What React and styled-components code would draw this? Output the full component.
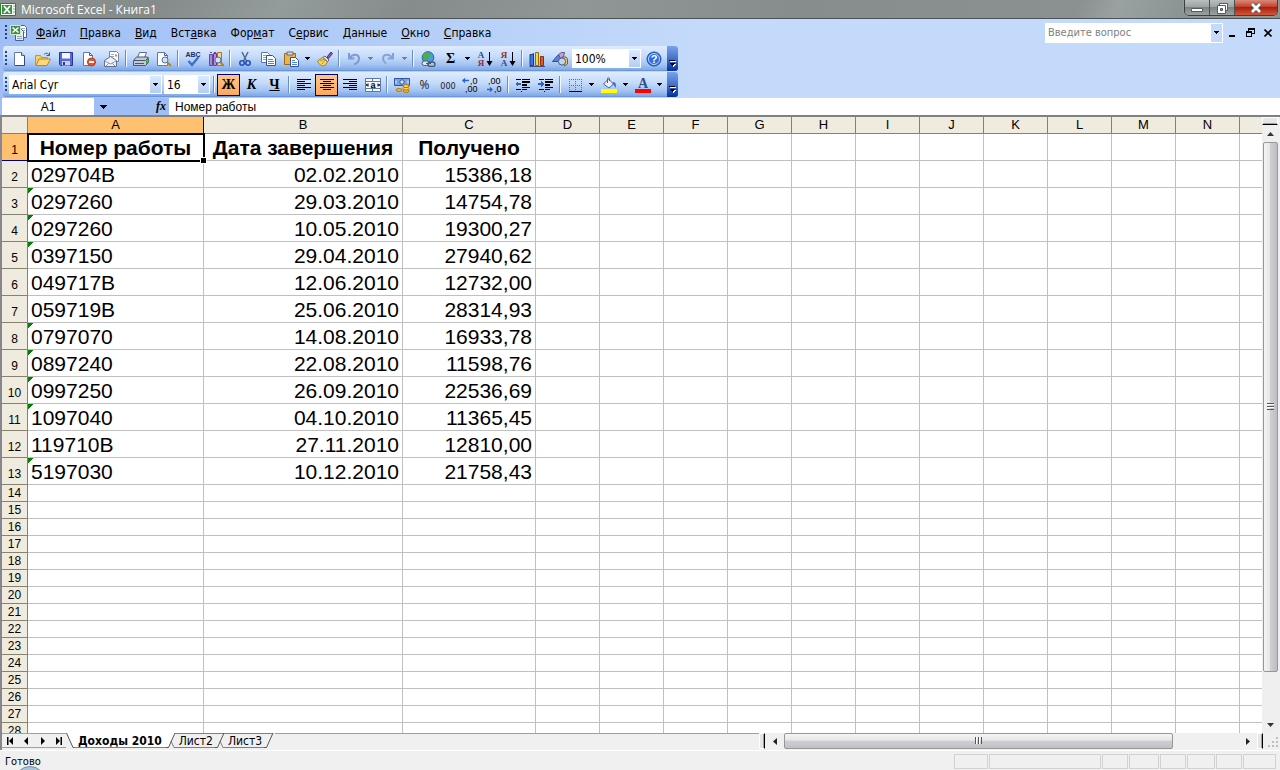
import React from "react";
import styled, { createGlobalStyle, css } from "styled-components";

const ui = '"DejaVu Sans Condensed", "Noto Sans", sans-serif';
const arial = '"Liberation Sans", Arial, sans-serif';

const Global = createGlobalStyle`
  * { box-sizing: border-box; }
  html, body, #root { height: 100%; }
  body { margin: 0; overflow: hidden; font: 11px ${ui}; color: #000; background: #f0f0f0; }
  button, input, select { font: inherit; color: inherit; margin: 0; padding: 0; border: 0; border-radius: 0; background: none; outline: none; }
  button { display: flex; align-items: center; justify-content: center; }
`;

const Window = styled.div`
  display: flex;
  flex-direction: column;
  height: 100vh;
  overflow: hidden;
`;

/* ---------- title bar ---------- */
const TitleBar = styled.header`
  display: flex;
  justify-content: space-between;
  height: 19px;
  flex: none;
  border-bottom: 1px solid #4d5354;
  background: linear-gradient(115deg, #8b9392 0%, #848b8a 12%, #949c9b 22%, #858c8b 32%, #8f9695 45%, #868d8c 62%, #8a9190 84%, #9aa2a1 87%, #8a9291 93%);
`;
const Title = styled.h1`
  display: flex;
  align-items: center;
  gap: 5px;
  margin: 0;
  font: 12px "Open Sans", "Noto Sans", sans-serif;
  color: #fff;
`;
const WinButtons = styled.div`
  display: flex;
  height: 16px;
  margin-right: 2px;
  border: 1px solid #3b4040;
  border-top: 0;
  border-radius: 0 0 5px 5px;
  overflow: hidden;
  box-shadow: 0 0 1px #dfe3e3;
`;
const WinButton = styled.button`
  width: ${(p) => (p.$close ? 42 : 25)}px;
  border-right: ${(p) => (p.$close ? 0 : "1px solid #4b5050")};
  background: ${(p) =>
    p.$close
      ? "linear-gradient(#d98a7b, #c4412c 45%, #a8200e 50%, #d2563a)"
      : "linear-gradient(#b9bfbf, #9da4a4 45%, #7c8484 50%, #99a1a1)"};
`;

/* ---------- command bars ---------- */
const Bars = styled.div`
  flex: none;
  background: linear-gradient(90deg, #9ebef5, #c4dafa 700px);
`;
const MenuBar = styled.nav`
  display: flex;
  align-items: center;
  height: 27px;
  padding: 0 3px 0 5px;
`;
const Handle = styled.span`
  flex: none;
  width: 3px;
  height: 16px;
  background: repeating-linear-gradient(#27418e 0 2px, transparent 2px 4px);
  background-size: 2px 100%;
  background-repeat: no-repeat;
`;
const MenuItem = styled.button`
  height: 20px;
  padding: 0 7px;
  font-size: 12px;
  white-space: pre;
`;
const MenuIcon = styled.span`
  display: flex;
  justify-content: center;
  width: 21px;
`;
const Spacer = styled.span`
  flex: 1;
`;
const AskBox = styled.span`
  display: flex;
  width: 178px;
  height: 20px;
  padding: 1px;
  background: #fff;
`;
const AskInput = styled.input`
  flex: 1;
  min-width: 0;
  padding: 0 2px;
  &::placeholder { color: #808080; opacity: 1; }
`;
const AskArrow = styled.button`
  width: 11px;
  background: #c4dafa;
`;
const DocButton = styled.button`
  width: 18px;
  height: 16px;
`;
const ToolBar = styled.div`
  display: flex;
  align-items: center;
  width: 675px;
  height: 25px;
  margin: 0 0 1px 3px;
  padding-left: 2px;
  border-radius: 3px;
  overflow: hidden;
  background: linear-gradient(#dfecfe, #c3dafa 45%, #a3c3f2 75%, #7fa8e6 96%, #5a84cf);
`;
const Tool = styled.button`
  flex: none;
  width: 23px;
  height: 22px;
  ${(p) =>
    p.$on &&
    css`
      border: 1px solid #000080;
      background: linear-gradient(#ffc58a, #fba85c);
    `}
`;
const Letter = styled.span`
  font: ${(p) => (p.$italic ? "italic" : "normal")} bold 14px "Liberation Serif", serif;
  text-decoration: ${(p) => (p.$under ? "underline" : "none")};
`;
const ToolText = styled.span`
  font: 12px "Open Sans", "Noto Sans", sans-serif;
  color: #222;
`;
const Drop = styled.button`
  flex: none;
  width: 11px;
  height: 22px;
  opacity: ${(p) => (p.$off ? 0.4 : 1)};
`;
const Sep = styled.span`
  flex: none;
  width: 2px;
  height: 17px;
  margin: 0 2px;
  border-left: 1px solid #6a8ccb;
  border-right: 1px solid #f1f9ff;
`;
const Combo = styled.span`
  position: relative;
  display: flex;
  flex: none;
  width: ${(p) => p.$w}px;
  height: 19px;
  margin: 0 1px;
  background: #fff;
`;
const ComboSelect = styled.select`
  width: 100%;
  padding: 0 14px 0 3px;
  appearance: none;
  font: 12px ${ui};
`;
const ComboArrow = styled.span`
  position: absolute;
  top: 1px;
  right: 1px;
  bottom: 1px;
  display: flex;
  align-items: center;
  justify-content: center;
  width: 11px;
  background: linear-gradient(#dbe9fd, #b4cef5);
  pointer-events: none;
`;
const Overflow = styled.button`
  width: 11px;
  height: 25px;
  margin-left: auto;
  align-items: flex-end;
  padding-bottom: 2px;
  background: linear-gradient(#7aa2ea, #4272cb 50%, #05319a);
`;

/* ---------- formula bar ---------- */
const FormulaBar = styled.div`
  display: flex;
  flex: none;
  height: 17px;
  padding-left: 2px;
  background: #9ebef5;
`;
const NameBox = styled.input`
  width: 92px;
  background: #fff;
  text-align: center;
  font: 12px ${arial};
`;
const NameArrow = styled.button`
  width: 18px;
`;
const Fx = styled.button`
  width: 16px;
  margin-left: 41px;
  font: italic bold 12px "Liberation Serif", serif;
`;
const FormulaInput = styled.input`
  flex: 1;
  padding-left: 6px;
  background: #fff;
  font: 12px ${arial};
`;

/* ---------- sheet ---------- */
const Work = styled.main`
  display: flex;
  flex: 1;
  min-height: 0;
  padding-right: 2px;
  border-left: 2px solid #87878d;
  border-top: 2px solid #808080;
`;
const SheetArea = styled.div`
  flex: 1;
  min-width: 0;
  overflow: hidden;
  background: #fff;
`;
const Grid = styled.table`
  width: 100%;
  table-layout: fixed;
  border-collapse: separate;
  border-spacing: 0;
  font-family: ${arial};
`;
const Col = styled.col`
  width: ${(p) => (p.$w ? p.$w + "px" : "auto")};
`;
const ColHead = styled.th`
  height: 17px;
  padding: 0;
  border-right: 1px solid ${(p) => (p.$on ? "#000080" : "#85836d")};
  border-bottom: 1px solid ${(p) => (p.$on ? "#000080" : "#85836d")};
  background: ${(p) => (p.$on ? "#ffc06f" : "#efebde")};
  font-weight: normal;
  font-size: 13px;
  line-height: 16px;
  thead &:last-child { border-right: 0; }
`;
const RowHead = styled(ColHead)`
  height: ${(p) => (p.$tall ? 27 : 17)}px;
  padding-bottom: ${(p) => (p.$tall ? 2 : 0)}px;
  border-right-color: #85836d;
  font-size: 12px;
  vertical-align: bottom;
`;
const Cell = styled.td`
  position: relative;
  padding: 2px 3px 0;
  border-right: 1px solid #c0c0c0;
  border-bottom: 1px solid #c0c0c0;
  font-size: 21px;
  line-height: 24px;
  white-space: nowrap;
  text-align: ${(p) => p.$align || "left"};
  font-weight: ${(p) => (p.$bold ? "bold" : "normal")};
  ${(p) => p.$flag && "background: linear-gradient(135deg, #008000 4px, transparent 4px);"}
  &:last-child { border-right: 0; }
`;
const Selection = styled.span`
  position: absolute;
  inset: -1px -2px -2px -1px;
  border: 2px solid #000;
  z-index: 1;
  &::after {
    content: "";
    position: absolute;
    right: -3px;
    bottom: -3px;
    width: 5px;
    height: 5px;
    background: #000;
    outline: 1px solid #fff;
  }
`;

/* ---------- scroll bars ---------- */
const VScroll = styled.div`
  display: flex;
  flex-direction: column;
  flex: none;
  width: 16px;
  background: #efefef;
`;
const VSplit = styled.span`
  height: 8px;
  border: 1px solid #fff;
  border-bottom: 1px solid #000;
  background: #e6e6e6;
  box-shadow: inset 0 -1px #a0a0a0;
`;
const ScrollButton = styled.button`
  flex: none;
  width: ${(p) => (p.$h ? 19 : 16)}px;
  height: ${(p) => (p.$h ? 16 : 17)}px;
`;
const VThumb = styled.button`
  flex: 530;
  margin-left: 1px;
  border: 1px solid #979797;
  border-radius: 2px;
  background: linear-gradient(90deg, #f5f5f5, #e6e6e8 45%, #cfcfd3 50%, #bcbcc2);
`;
const Rest = styled.span`
  flex: ${(p) => p.$n};
`;
const Bottom = styled.div`
  display: flex;
  flex: none;
  height: 17px;
  border-left: 2px solid #87878d;
  background: #f0f0f0;
`;
const Tabs = styled.div`
  display: flex;
  flex: 757;
  min-width: 0;
  height: 15px;
`;
const TabNav = styled.button`
  width: 16px;
  border-top: 1px solid #a0a0a0;
  border-bottom: 1px solid #a0a0a0;
`;
const Tab = styled.button`
  padding: 0 ${(p) => (p.$on ? 4 : 2)}px;
  border-bottom: 1px solid #808080;
  border-top: 1px solid ${(p) => (p.$on ? "#fff" : "#808080")};
  background: ${(p) => (p.$on ? "#fff" : "#f0f0f0")};
  font: ${(p) => (p.$on ? "bold 12px" : "12px")} ${ui};
`;
const Slant = styled.svg`
  flex: none;
  width: ${(p) => p.$w}px;
  height: 15px;
`;
const TabFill = styled.span`
  flex: 1;
  border-top: 1px solid #a0a0a0;
`;
const HScroll = styled.div`
  display: flex;
  flex: 521;
  height: 16px;
`;
const HSplit = styled.span`
  width: 6px;
  border: 1px solid #fff;
  border-right: 1px solid #000;
  background: #e6e6e6;
  box-shadow: inset -1px 0 #a0a0a0;
`;
const HThumb = styled.button`
  flex: 388;
  border: 1px solid #979797;
  border-radius: 2px;
  background: linear-gradient(#f5f5f5, #e6e6e8 45%, #cfcfd3 50%, #c0c0c6);
`;
const Corner = styled.span`
  display: flex;
  align-items: flex-end;
  justify-content: flex-end;
  width: 17px;
  padding: 1px;
`;

/* ---------- status bar ---------- */
const Status = styled.footer`
  position: relative;
  display: flex;
  flex: none;
  align-items: center;
  gap: 1px;
  height: 20px;
  padding: 2px 4px 0 5px;
  border-top: 1px solid #fff;
  background: #f0f0f0;
`;
const StatusCell = styled.span`
  width: ${(p) => p.$w}px;
  height: 15px;
  border: 1px solid #d2d2d2;
`;
const Orb = styled.span`
  position: absolute;
  left: 14px;
  top: 15px;
  width: 32px;
  height: 32px;
  border-radius: 50%;
  border: 1px solid #6f93b0;
  background: #a9c4d8;
`;

/* ---------- drawings ---------- */
const Svg = ({ w = 16, h = 16, children, crisp }) => (
  <svg width={w} height={h} viewBox={`0 0 ${w} ${h}`} fill="none" shapeRendering={crisp ? "crispEdges" : "auto"} aria-hidden="true">
    {children}
  </svg>
);
const Down = () => (
  <Svg w={5} h={3} crisp><path d="M0 0h5v1H4v1H3v1H2V2H1V1H0z" fill="#000" /></Svg>
);
const TriV = ({ up }) => (
  <Svg w={7} h={4}><path d={up ? "M0 4 3.500 0 7 4z" : "M0 0h7L3.500 4z"} fill="#333" /></Svg>
);
const TriH = ({ right }) => (
  <Svg w={4} h={7}><path d={right ? "M0 0v7l4-3.500z" : "M4 0v7L0 3.500z"} fill="#222" /></Svg>
);
const ExcelLogo = () => (
  <Svg>
    <path d="M.5 2.500h15v12H.5z" fill="#f3faf1" stroke="#2f7c35" />
    <path d="M2 4h10v9H2z" fill="#3d9142" />
    <path d="M13 5h2M13 8h2M13 11h2" stroke="#7fb983" />
    <path d="m4 5 6 7M10 5l-6 7" stroke="#fff" strokeWidth="1.800" />
  </Svg>
);
const DocLogo = () => (
  <Svg w={18} h={18}>
    <path d="M8.500 1.500h6l2 2v10h-8z" fill="#fff" stroke="#4a5f8e" />
    <path d="M11 4.500h4M11 6.500h4M11 8.500h4" stroke="#9db0d8" />
    <path d="M5.500 5.500h6l2 2v9h-8z" fill="#e6edf9" stroke="#4a5f8e" />
    <path d="M7 12.500h5M7 14.500h5" stroke="#8ca0c8" />
    <path d="M.5 1.500h10v9H.5z" fill="#3d9142" stroke="#cfe6cf" />
    <path d="m2.500 3.500 6 5m0-5-6 5" stroke="#fff" strokeWidth="1.600" />
  </Svg>
);
const Page = ({ x = 0 }) => (
  <path d={`M${3 + x}.5 1.500h6l4 4v9h-10z`} fill="#fff" stroke="#4a5f8e" />
);
const Lens = ({ x = 9, y = 9 }) => (
  <>
    <path d={`m${x + 2} ${y + 2} 4 4`} stroke="#b5812d" strokeWidth="2" />
    <circle cx={x} cy={y} r="3" fill="#c9e6fb" stroke="#5a6d96" />
  </>
);
const Icons = {
  new: <><path d="M2.500 1.500h7l3 3v10h-10z" fill="#fff" stroke="#6478a8" /><path d="M9.500 1.500v3h3" fill="#c8d5ee" stroke="#4a5f8e" /><path d="M12.500 5v9.500H3" stroke="#33487c" /></>,
  open: <>
    <path d="M.5 13.500v-9h5l1 2h6v7z" fill="#f7cf60" stroke="#c8942a" />
    <path d="M1 14.500 4 8h11.500l-3.500 6.500z" fill="#fdd778" stroke="#b98420" />
    <path d="M9 3.500c2-2 4-1.500 5 .5M14.500 1.500v3h-3" stroke="#2f5a9c" />
  </>,
  save: <>
    <path d="M1.500 1.500h13v13h-12l-1-1z" fill="#5669d6" stroke="#2b3795" />
    <path d="M4 2h8v6H4z" fill="#f3f6ff" /><path d="M4 7h8v1H4z" fill="#a9b5ee" />
    <path d="M4 10h8v4.500H4z" fill="#c9cfe8" /><path d="M5 11h2v3H5z" fill="#2b3795" />
  </>,
  perm: <>
    <path d="M2.500 1.500h6l3 3v10h-9z" fill="#fff" stroke="#6478a8" /><path d="M8.500 1.500v3h3" stroke="#4a5f8e" />
    <circle cx="10.500" cy="11" r="4" fill="#e2572f" stroke="#b93c1b" /><path d="M8 10h5v2H8z" fill="#fff" />
  </>,
  mail: <>
    <path d="M5.500.5h7l2 2v8h-9z" fill="#fff" stroke="#7383a8" /><path d="M11 3.500h2v2h-2z" fill="#e2872f" /><path d="M7 3.500h3M7 5.500h3" stroke="#9aaaca" />
    <path d="m.5 9.500 6-4 6 4v6H.5z" fill="#eef1f6" stroke="#65708d" /><path d="m1 10 5.500 3L12 10M2 15l3-3m6 3-3-3" stroke="#8e98ae" />
  </>,
  print: <>
    <path d="m4.500 6.500 2-5h7l-2 5z" fill="#fff" stroke="#5b6d95" />
    <path d="m.5 9.500 3-3.500h11l1 1.500v4l-3 3H.5z" fill="#c3cad6" stroke="#4a5670" />
    <path d="M1 9.500h11.500l3-3M2 12.500h9" stroke="#4a5670" /><path d="m13.500 10 1.500-2v3l-1.500 2z" stroke="#2cab36" fill="#68d35f" />
  </>,
  preview: <><path d="M1.500 1.500h7l3 3v10h-10z" fill="#fff" stroke="#6478a8" /><path d="M8.500 1.500v3h3" stroke="#4a5f8e" /><Lens x={9} y={9} /></>,
  spell: <>
    <text x="8" y="6" textAnchor="middle" fontSize="7" fontWeight="bold" fontFamily="Liberation Sans" fill="#1b2e63">ABC</text>
    <path d="m3.500 10 3.500 4 6.500-8" stroke="#3c6fd4" strokeWidth="2.400" />
  </>,
  research: <>
    <path d="M1.500 3.500h3v11h-3z" fill="#a48ad8" stroke="#6247a0" /><path d="M5.500 2.500h3v12h-3z" fill="#c08adb" stroke="#6c3b8e" />
    <path d="M2 1.500h2M6 1.500h2" stroke="#6247a0" />
    <path d="M9.500 1.500h4v13h-4z" fill="#f6d98c" stroke="#a3791d" /><Lens x={10} y={9} />
  </>,
  cut: <>
    <path d="m5 1 4.500 9M11 1 6.500 10" stroke="#54698f" strokeWidth="1.500" />
    <circle cx="5" cy="12" r="2.200" stroke="#2352b5" strokeWidth="1.600" /><circle cx="11" cy="12" r="2.200" stroke="#2352b5" strokeWidth="1.600" />
  </>,
  copy: <>
    <path d="M1.500 1.500h6l2 2v8h-8z" fill="#fff" stroke="#5774b8" /><path d="M3 4.500h4M3 6.500h5M3 8.500h5" stroke="#86a0da" />
    <path d="M6.500 4.500h6l3 3v7h-9z" fill="#fff" stroke="#2f52a5" /><path d="M8 8.500h5M8 10.500h6M8 12.500h6" stroke="#5b81d1" />
  </>,
  paste: <>
    <path d="M1.500 2.500h11v11h-11z" fill="#eeb347" stroke="#9a6a16" /><path d="M4 1h6v3H4z" fill="#d5d8e0" stroke="#6b6b6b" />
    <path d="M7.500 6.500h5l3 3v6h-8z" fill="#fff" stroke="#2f52a5" /><path d="M9 9.500h3M9 11.500h5M9 13.500h5" stroke="#5b81d1" />
  </>,
  brush: <>
    <path d="m10 6 4-5 1.500 1.500-4 5z" fill="#7b5ea8" stroke="#4b3778" /><path d="m8 5 4 4-1.500 1.500-5-4z" fill="#d8dce6" stroke="#667" />
    <path d="m5.500 6.500 5 4.500-3 4c-3 0-6-2-7-5z" fill="#f5d765" stroke="#a8811e" /><path d="m3 10 4-2M5 13l3-4" stroke="#b9922c" />
  </>,
  undo: <path d="M3 2v5.500h5.500M3.500 7C7 2 13 3 13 7.500c0 3-2 5-5 6" stroke="#7d9cd6" strokeWidth="2" />,
  redo: <path d="M13 2v5.500H7.500M12.500 7C9 2 3 3 3 7.500c0 3 2 4 3 5" stroke="#86a3d9" strokeWidth="2" />,
  link: <>
    <circle cx="8" cy="6.500" r="5.800" fill="#4a9be0" stroke="#2c5a93" /><path d="M5 2c3-1 6 0 6 2s-3 1-3 4-4 2-5-1 0-4 2-5z" fill="#48b04b" />
    <rect x="2" y="10" width="7" height="4.500" rx="2.200" fill="#dfe5ee" stroke="#4c5b75" /><rect x="8" y="11" width="7" height="4.500" rx="2.200" stroke="#4c5b75" strokeWidth="1.400" /><path d="M6 12.500h5" stroke="#4c5b75" />
  </>,
  chart: <>
    <path d="M1 3.500h2l1.500-1v12H1z" fill="#3b77de" stroke="#1d3d84" /><path d="M6.500 1.500h3v13h-3z" fill="#fbd24b" stroke="#8f6c10" />
    <path d="M11.500 5.500h3v9h-3z" fill="#e65a2b" stroke="#8b2d10" /><path d="M.5 15.500H16" stroke="#3f4f7d" />
  </>,
  draw: <>
    <path d="m.5 10.500 5-6h5l-4 6z" fill="#5b86d8" stroke="#2d4f98" /><path d="m6.500 3.500 3-2h3l-1 4-3 2z" fill="#b9a5e0" stroke="#60508c" />
    <path d="M10 6h4l1.500 2v5l-3 2z" fill="#f2c268" stroke="#80641f" /><circle cx="10" cy="10.500" r="3.600" fill="#c5d3ea" stroke="#4a5b80" />
  </>,
  help: <>
    <circle cx="8" cy="8" r="7" fill="#2b6fdf" stroke="#1c4fab" /><circle cx="8" cy="8" r="5.500" stroke="#bcd6fb" />
    <text x="8" y="12" textAnchor="middle" fontSize="11" fontWeight="bold" fontFamily="Liberation Sans" fill="#fff">?</text>
  </>,
  merge: <>
    <path d="M.5 1.500h15v13H.5zM.5 4.500h15M.5 11.500h15M7.500 1v3M7.500 12v3" stroke="#5d76a8" fill="#f4f8ff" />
    <text x="8" y="11" textAnchor="middle" fontSize="9" fontWeight="bold" fontFamily="Liberation Sans" fill="#000">a</text>
    <path d="M1 8h3M12 8h3M3 6.500 1.500 8 3 9.500M13 6.500 14.500 8 13 9.500" stroke="#000" />
  </>,
  money: <>
    <path d="M.5 1.500h15v7H.5z" fill="#7aa2e4" stroke="#2f55a0" /><circle cx="8" cy="5" r="2.200" fill="#d8e6fb" stroke="#2f55a0" /><path d="M2 3.500v3M14 3.500v3" stroke="#e6effc" />
    <ellipse cx="5" cy="13" rx="3" ry="1.500" fill="#f5b72e" stroke="#b87a10" /><ellipse cx="12" cy="14" rx="3" ry="1.500" fill="#f5b72e" stroke="#b87a10" />
    <ellipse cx="12" cy="11.500" rx="3" ry="1.500" fill="#ffd25a" stroke="#b87a10" /><ellipse cx="12" cy="9" rx="3" ry="1.500" fill="#ffd25a" stroke="#b87a10" />
  </>,
  borders: <>
    <path d="M2.500 2v12M8.500 2v12M14.500 2v12M2 2.500h13M2 8.500h13" stroke="#5d6f96" strokeDasharray="1 1" /><path d="M2 14.500h13" stroke="#000" />
  </>,
  fill: <>
    <path d="m2.500 7 5-5 5 5-4.500 4z" fill="#e8eefb" stroke="#4b628f" /><path d="M6.500 6V1.500c0-1 2-1 2 0V4" stroke="#4b628f" />
    <path d="M12 5c3 0 3.500 3 2.500 6-1-1-1-3-3-4z" fill="#3c6fd4" /><path d="M0 12h16v4H0z" fill="#ff0" />
  </>,
  font: <>
    <text x="8" y="11" textAnchor="middle" fontSize="14" fontWeight="bold" fontFamily="Liberation Serif" fill="#2f4d8f">A</text>
    <path d="M0 12h16v4H0z" fill="#f00" />
  </>,
};
const lines = (ws, side) =>
  ws.map((w, i) => {
    const x = side === "l" ? 1 : side === "r" ? 15 - w : 8 - w / 2;
    return `M${x} ${2 + i * 2}h${w}v1h-${w}z`;
  }).join("");
const AlignIcon = ({ side }) => (
  <Svg crisp><path d={lines([14, 8, 14, 8, 14, 8], side)} fill="#000" /></Svg>
);
const IndentIcon = ({ inward }) => (
  <Svg crisp>
    <path d="M1 2h5v1H1zM7 2h8v1H7zM7 4h8v2H7zM7 7h5v2H7zM7 10h8v1H7zM1 12h5v1H1zM7 12h5v1H7zM6 14h1v1H6z" fill="#000" />
    <path d={inward ? "M0 6h3V4l3 3-3 3V8H0z" : "M6 6H3V4L0 7l3 3V8h3z"} fill="#2f62c9" />
  </Svg>
);
const SortIcon = ({ a, b }) => (
  <Svg>
    <text x="4" y="7" textAnchor="middle" fontSize="9" fontWeight="bold" fontFamily="Liberation Serif" fill={a === "A" ? "#2f4d8f" : "#8f2f2f"}>{a}</text>
    <text x="4" y="15" textAnchor="middle" fontSize="9" fontWeight="bold" fontFamily="Liberation Serif" fill={b === "A" ? "#2f4d8f" : "#8f2f2f"}>{b}</text>
    <path d="M12.500 1v12" stroke="#000" /><path d="M9.500 10h6l-3 5z" fill="#000" />
  </Svg>
);
const DecimalIcon = ({ less }) => (
  <Svg w={20} h={20}>
    <text x={less ? 4 : 9} y="9" fontSize="9" fontFamily="Liberation Sans" fill="#000">{less ? ",00" : ",0"}</text>
    <text x={less ? 10 : 4} y="17" fontSize="9" fontFamily="Liberation Sans" fill="#000">{less ? ",0" : ",00"}</text>
    <path d={less ? "M3 14.500h5M6 12.500l2 2-2 2" : "M8 5.500H2M4 3.500l-2 2 2 2"} stroke="#2f62c9" strokeWidth="1.400" />
  </Svg>
);

const T = ({ i, label }) => <Tool aria-label={label} type="button"><Svg>{Icons[i]}</Svg></Tool>;
const D = ({ off }) => <Drop $off={off} type="button" aria-label="Список"><Down /></Drop>;
const ComboBox = ({ w, label, value }) => (
  <Combo $w={w}>
    <ComboSelect aria-label={label} defaultValue={value}><option>{value}</option></ComboSelect>
    <ComboArrow><Down /></ComboArrow>
  </Combo>
);
const More = () => (
  <Overflow type="button" aria-label="Параметры панели">
    <Svg w={7} h={9} crisp><path d="M1 1h6v1H1zM2 4h5v1H6v1H5v1H4V6H3V5H2z" fill="#fff" /><path d="M0 0h6v1H0zM1 3h5v1H5v1H4v1H3V5H2V4H1z" fill="#000" /></Svg>
  </Overflow>
);

const menus = [["", "Ф", "айл"], ["", "П", "равка"], ["", "В", "ид"], ["Вст", "а", "вка"], ["Фор", "м", "ат"], ["С", "е", "рвис"], ["", "Д", "анные"], ["", "О", "кно"], ["", "С", "правка"]];
const letters = "ABCDEFGHIJKLMN".split("");
const widths = [26, 176, 199, 133, ...Array(11).fill(64), 0];
const data = [
  ["029704B", "02.02.2010", "15386,18"],
  ["0297260", "29.03.2010", "14754,78"],
  ["0297260", "10.05.2010", "19300,27"],
  ["0397150", "29.04.2010", "27940,62"],
  ["049717B", "12.06.2010", "12732,00"],
  ["059719B", "25.06.2010", "28314,93"],
  ["0797070", "14.08.2010", "16933,78"],
  ["0897240", "22.08.2010", "11598,76"],
  ["0997250", "26.09.2010", "22536,69"],
  ["1097040", "04.10.2010", "11365,45"],
  ["119710B", "27.11.2010", "12810,00"],
  ["5197030", "10.12.2010", "21758,43"],
];
const blanks = (n) => Array.from({ length: n }, (_, i) => <Cell key={"b" + i} />);

function Sheet() {
  return (
    <Grid>
      <colgroup>{widths.map((w, i) => <Col key={i} $w={w} />)}</colgroup>
      <thead>
        <tr>
          <ColHead />
          {letters.map((l) => <ColHead key={l} $on={l === "A"} scope="col">{l}</ColHead>)}
          <ColHead />
        </tr>
      </thead>
      <tbody>
        <tr>
          <RowHead $on $tall scope="row">1</RowHead>
          <Cell $bold $align="center">Номер работы<Selection /></Cell>
          <Cell $bold $align="center">Дата завершения</Cell>
          <Cell $bold $align="center">Получено</Cell>
          {blanks(12)}
        </tr>
        {data.map(([id, date, sum], i) => (
          <tr key={i}>
            <RowHead $tall scope="row">{i + 2}</RowHead>
            <Cell $flag={/^\d+$/.test(id)}>{id}</Cell>
            <Cell $align="right">{date}</Cell>
            <Cell $align="right">{sum}</Cell>
            {blanks(12)}
          </tr>
        ))}
        {Array.from({ length: 15 }, (_, i) => (
          <tr key={i}>
            <RowHead scope="row">{i + 14}</RowHead>
            {blanks(15)}
          </tr>
        ))}
      </tbody>
    </Grid>
  );
}

const TabEdge = ({ next, active }) => (
  <Slant $w={11} viewBox="0 0 11 15" aria-hidden="true">
    <path d="M0 0H9L2 15H0z" fill={active ? "#fff" : "#f0f0f0"} />
    {next && <path d="M9 .5h2M5 8l3 6.500h3" stroke="#808080" fill="none" />}
    {!active && <path d="M0 .5h9" stroke="#808080" />}
    <path d="M0 14.500h2.500L9 0" stroke="#555" fill="none" />
  </Slant>
);

export default function App() {
  return (
    <Window>
      <Global />
      <TitleBar>
        <Title><ExcelLogo />Microsoft Excel - Книга1</Title>
        <WinButtons>
          <WinButton aria-label="Свернуть"><Svg w={12} h={12}><path d="M.5 6.500h11v3H.5z" fill="#fff" stroke="#555b66" /></Svg></WinButton>
          <WinButton aria-label="Восстановить"><Svg w={12} h={12}><path d="M3.500 1.500h8v7h-8z" fill="#fff" stroke="#555b66" /><path d="M1.500 3.500h8v8h-8z" fill="#fff" stroke="#555b66" /><path d="M4.500 6.500h2v2h-2z" fill="#889" stroke="#555b66" /></Svg></WinButton>
          <WinButton $close aria-label="Закрыть"><Svg w={12} h={12}><path d="m2 2 8 8m0-8-8 8" stroke="#555b66" strokeWidth="4.500" /><path d="m2 2 8 8m0-8-8 8" stroke="#fff" strokeWidth="2.600" /></Svg></WinButton>
        </WinButtons>
      </TitleBar>

      <Bars>
        <MenuBar>
          <Handle />
          <MenuIcon><DocLogo /></MenuIcon>
          {menus.map(([a, u, b]) => <MenuItem key={a + u + b} type="button"><span>{a}<u>{u}</u>{b}</span></MenuItem>)}
          <Spacer />
          <AskBox>
            <AskInput aria-label="Введите вопрос" placeholder="Введите вопрос" />
            <AskArrow type="button" aria-label="Список вопросов"><Down /></AskArrow>
          </AskBox>
          <DocButton aria-label="Свернуть книгу"><Svg w={9} h={9} crisp><path d="M1 7h6v2H1z" fill="#000" /></Svg></DocButton>
          <DocButton aria-label="Восстановить книгу"><Svg w={9} h={9} crisp><path d="M2 0h7v6H6V5h2V2H3v1H2zM0 3h6v6H0zM1 5v3h4V5z" fill="#000" fillRule="evenodd" /></Svg></DocButton>
          <DocButton aria-label="Закрыть книгу"><Svg w={8} h={8}><path d="m.5.5 7 7m0-7-7 7" stroke="#000" strokeWidth="1.600" /></Svg></DocButton>
        </MenuBar>

        <ToolBar>
          <Handle />
          <T i="new" label="Создать" /><T i="open" label="Открыть" /><T i="save" label="Сохранить" /><T i="perm" label="Разрешения" /><T i="mail" label="Сообщение" />
          <Sep />
          <T i="print" label="Печать" /><T i="preview" label="Просмотр" />
          <Sep />
          <T i="spell" label="Орфография" /><T i="research" label="Справочники" />
          <Sep />
          <T i="cut" label="Вырезать" /><T i="copy" label="Копировать" /><T i="paste" label="Вставить" /><D /><T i="brush" label="Формат по образцу" />
          <Sep />
          <T i="undo" label="Отменить" /><D off /><T i="redo" label="Вернуть" /><D off />
          <Sep />
          <T i="link" label="Гиперссылка" />
          <Tool type="button" aria-label="Автосумма"><Letter>Σ</Letter></Tool><D />
          <Tool type="button" aria-label="По возрастанию"><SortIcon a="A" b="Я" /></Tool>
          <Tool type="button" aria-label="По убыванию"><SortIcon a="Я" b="A" /></Tool>
          <Sep />
          <T i="chart" label="Диаграмма" /><T i="draw" label="Рисование" />
          <ComboBox w={69} label="Масштаб" value="100%" />
          <T i="help" label="Справка" />
          <More />
        </ToolBar>

        <ToolBar>
          <Handle />
          <ComboBox w={153} label="Шрифт" value="Arial Cyr" />
          <ComboBox w={46} label="Размер" value="16" />
          <Sep />
          <Tool $on type="button" aria-label="Полужирный"><Letter>Ж</Letter></Tool>
          <Tool type="button" aria-label="Курсив"><Letter $italic>К</Letter></Tool>
          <Tool type="button" aria-label="Подчёркнутый"><Letter $under>Ч</Letter></Tool>
          <Sep />
          <Tool type="button" aria-label="По левому краю"><AlignIcon side="l" /></Tool>
          <Tool $on type="button" aria-label="По центру"><AlignIcon side="c" /></Tool>
          <Tool type="button" aria-label="По правому краю"><AlignIcon side="r" /></Tool>
          <T i="merge" label="Объединить" />
          <Sep />
          <T i="money" label="Денежный формат" />
          <Tool type="button"><ToolText>%</ToolText></Tool>
          <Tool type="button"><Svg><text x="8" y="12" textAnchor="middle" fontSize="9" fontFamily="DejaVu Sans Condensed" fill="#222">000</text></Svg></Tool>
          <Tool type="button" aria-label="Увеличить разрядность"><DecimalIcon /></Tool>
          <Tool type="button" aria-label="Уменьшить разрядность"><DecimalIcon less /></Tool>
          <Sep />
          <Tool type="button" aria-label="Уменьшить отступ"><IndentIcon /></Tool>
          <Tool type="button" aria-label="Увеличить отступ"><IndentIcon inward /></Tool>
          <Sep />
          <T i="borders" label="Границы" /><D />
          <T i="fill" label="Цвет заливки" /><D />
          <T i="font" label="Цвет шрифта" /><D />
          <More />
        </ToolBar>
      </Bars>

      <FormulaBar>
        <NameBox aria-label="Имя" defaultValue="A1" />
        <NameArrow type="button" aria-label="Список имён"><Svg w={7} h={4} crisp><path d="M0 0h7v1H6v1H5v1H4v1H3V3H2V2H1V1H0z" fill="#000" /></Svg></NameArrow>
        <Fx type="button">fx</Fx>
        <FormulaInput aria-label="Строка формул" defaultValue="Номер работы" />
      </FormulaBar>

      <Work>
        <SheetArea><Sheet /></SheetArea>
        <VScroll>
          <VSplit />
          <ScrollButton aria-label="Вверх"><TriV up /></ScrollButton>
          <VThumb aria-label="Вертикальная прокрутка"><Svg w={8} h={8} crisp><path d="M0 0h7v1H0zM0 3h7v1H0zM0 6h7v1H0z" fill="#555" /><path d="M0 1h7v1H0zM0 4h7v1H0z" fill="#fff" /></Svg></VThumb>
          <Rest $n={44} />
          <ScrollButton aria-label="Вниз"><TriV /></ScrollButton>
        </VScroll>
      </Work>

      <Bottom>
        <Tabs>
          <TabNav aria-label="Первый лист"><Svg w={7} h={8}><path d="M0 0h1.500v8H0zM6 0v8L2 4z" fill="#000" /></Svg></TabNav>
          <TabNav aria-label="Предыдущий лист"><Svg w={7} h={8}><path d="M5 0v8L1 4z" fill="#000" /></Svg></TabNav>
          <TabNav aria-label="Следующий лист"><Svg w={7} h={8}><path d="M2 0v8l4-4z" fill="#000" /></Svg></TabNav>
          <TabNav aria-label="Последний лист"><Svg w={7} h={8}><path d="M5.500 0H7v8H5.500zM1 0v8l4-4z" fill="#000" /></Svg></TabNav>
          <Slant $w={8} viewBox="0 0 8 15" aria-hidden="true"><path d="M0 0h8v15z" fill="#fff" /><path d="M.5 0 7 14.500h1" stroke="#555" fill="none" /></Slant>
          <Tab $on>Доходы 2010</Tab>
          <TabEdge active next />
          <Tab>Лист2</Tab>
          <TabEdge next />
          <Tab>Лист3</Tab>
          <TabEdge />
          <TabFill />
        </Tabs>
        <HScroll>
          <HSplit />
          <ScrollButton $h aria-label="Влево"><TriH /></ScrollButton>
          <HThumb aria-label="Горизонтальная прокрутка"><Svg w={8} h={8} crisp><path d="M0 0h1v7H0zM3 0h1v7H3zM6 0h1v7H6z" fill="#555" /><path d="M1 0h1v7H1zM4 0h1v7H4z" fill="#fff" /></Svg></HThumb>
          <Rest $n={65} />
          <ScrollButton $h aria-label="Вправо"><TriH right /></ScrollButton>
          <HSplit />
          <Corner><Svg w={11} h={11} crisp><path d="M8 0h2v2H8zM4 4h2v2H4zM8 4h2v2H8zM0 8h2v2H0zM4 8h2v2H4zM8 8h2v2H8z" fill="#bdbdbd" /></Svg></Corner>
        </HScroll>
      </Bottom>

      <Status>
        <span>Готово</span>
        <Orb />
        <Spacer />
        {[34, 112, 26, 30, 26, 28, 26, 33].map((w, i) => <StatusCell key={i} $w={w} />)}
      </Status>
    </Window>
  );
}
